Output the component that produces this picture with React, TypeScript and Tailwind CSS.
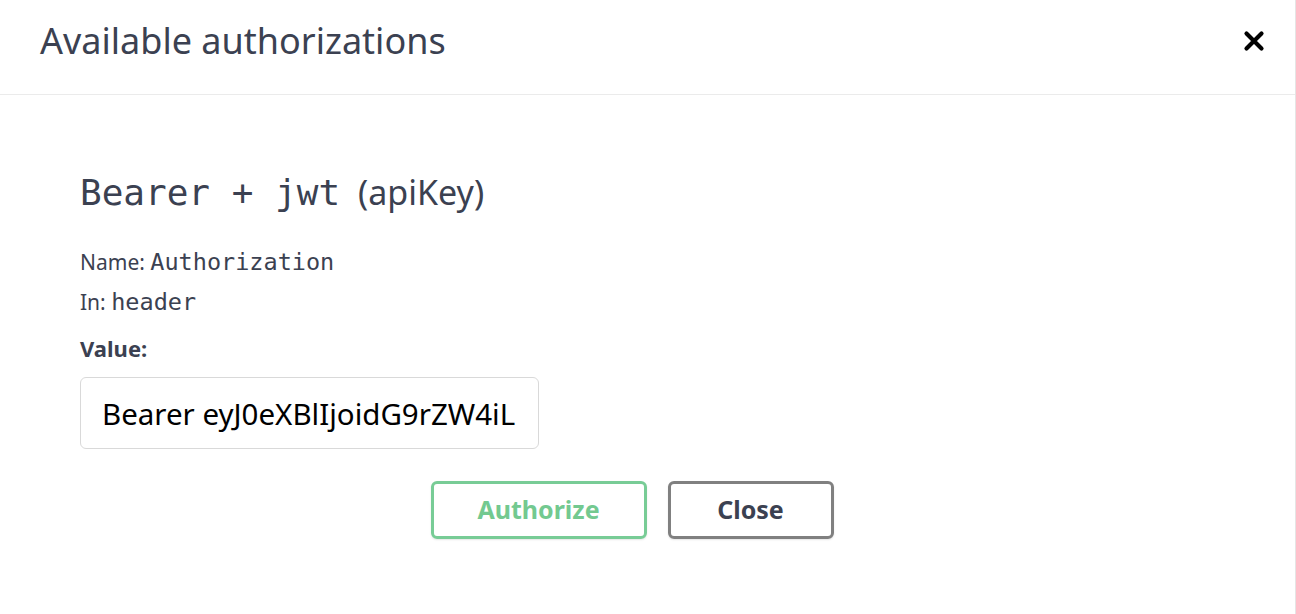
export default function App() {
  return (
    <div className="min-h-[614px] w-full bg-white border-r border-[#e5e5e5] text-[#3b4151]" style={{ fontFamily: '"Noto Sans", "Open Sans", sans-serif' }}>
      {/* Modal header */}
      <div className="flex items-center justify-between h-[95px] pl-10 pr-[30px] pb-[12px] border-b border-[#ebebeb]">
        <h3 className="text-[36px] leading-none font-normal">Available authorizations</h3>
        <button className="w-[22px] h-[24px] flex items-center justify-center" aria-label="close">
          <svg viewBox="0 0 22 22" width="22" height="22">
            <path d="M3.5 3.5 L18.5 18.5 M18.5 3.5 L3.5 18.5" stroke="#000" strokeWidth="4.2" strokeLinecap="round" />
          </svg>
        </button>
      </div>

      {/* Auth body */}
      <div className="px-20 pt-[73px]">
        <h4 className="flex items-baseline text-[36px] leading-[48px]">
          <span style={{ fontFamily: '"DejaVu Sans Mono", "Liberation Mono", monospace' }}>Bearer + jwt</span>
          <span className="ml-[18px] text-[34px]">(apiKey)</span>
        </h4>

        <div className="mt-[25px] text-[21px] leading-[40px]">
          <p>
            Name:{" "}
            <code className="text-[23.5px]" style={{ fontFamily: '"DejaVu Sans Mono", "Liberation Mono", monospace' }}>Authorization</code>
          </p>
          <p>
            In:{" "}
            <code className="text-[23.5px]" style={{ fontFamily: '"DejaVu Sans Mono", "Liberation Mono", monospace' }}>header</code>
          </p>
        </div>

        <div className="mt-[10px] text-[22px] leading-[32px] font-bold">Value:</div>

        <input
          readOnly
          value="Bearer eyJ0eXBlIjoidG9rZW4iL"
          className="mt-[13px] w-[459px] h-[72px] px-[21px] border border-[#d9d9d9] rounded-md text-[29.5px] text-black outline-none"
          style={{ fontFamily: '"Noto Sans", "Open Sans", sans-serif' }}
        />
      </div>

      {/* Buttons */}
      <div className="flex justify-center gap-[21px] pr-[31px] mt-[32px]">
        <button className="w-[216px] h-[58px] rounded-md border-[3px] border-[#78cc96] text-[#73c990] text-[25px] font-bold shadow-[0_1px_2px_rgba(0,0,0,0.1)]">
          Authorize
        </button>
        <button className="w-[166px] h-[58px] rounded-md border-[3px] border-[#808080] text-[#3b4151] text-[25px] font-bold shadow-[0_1px_2px_rgba(0,0,0,0.1)]">
          Close
        </button>
      </div>
    </div>
  )
}
